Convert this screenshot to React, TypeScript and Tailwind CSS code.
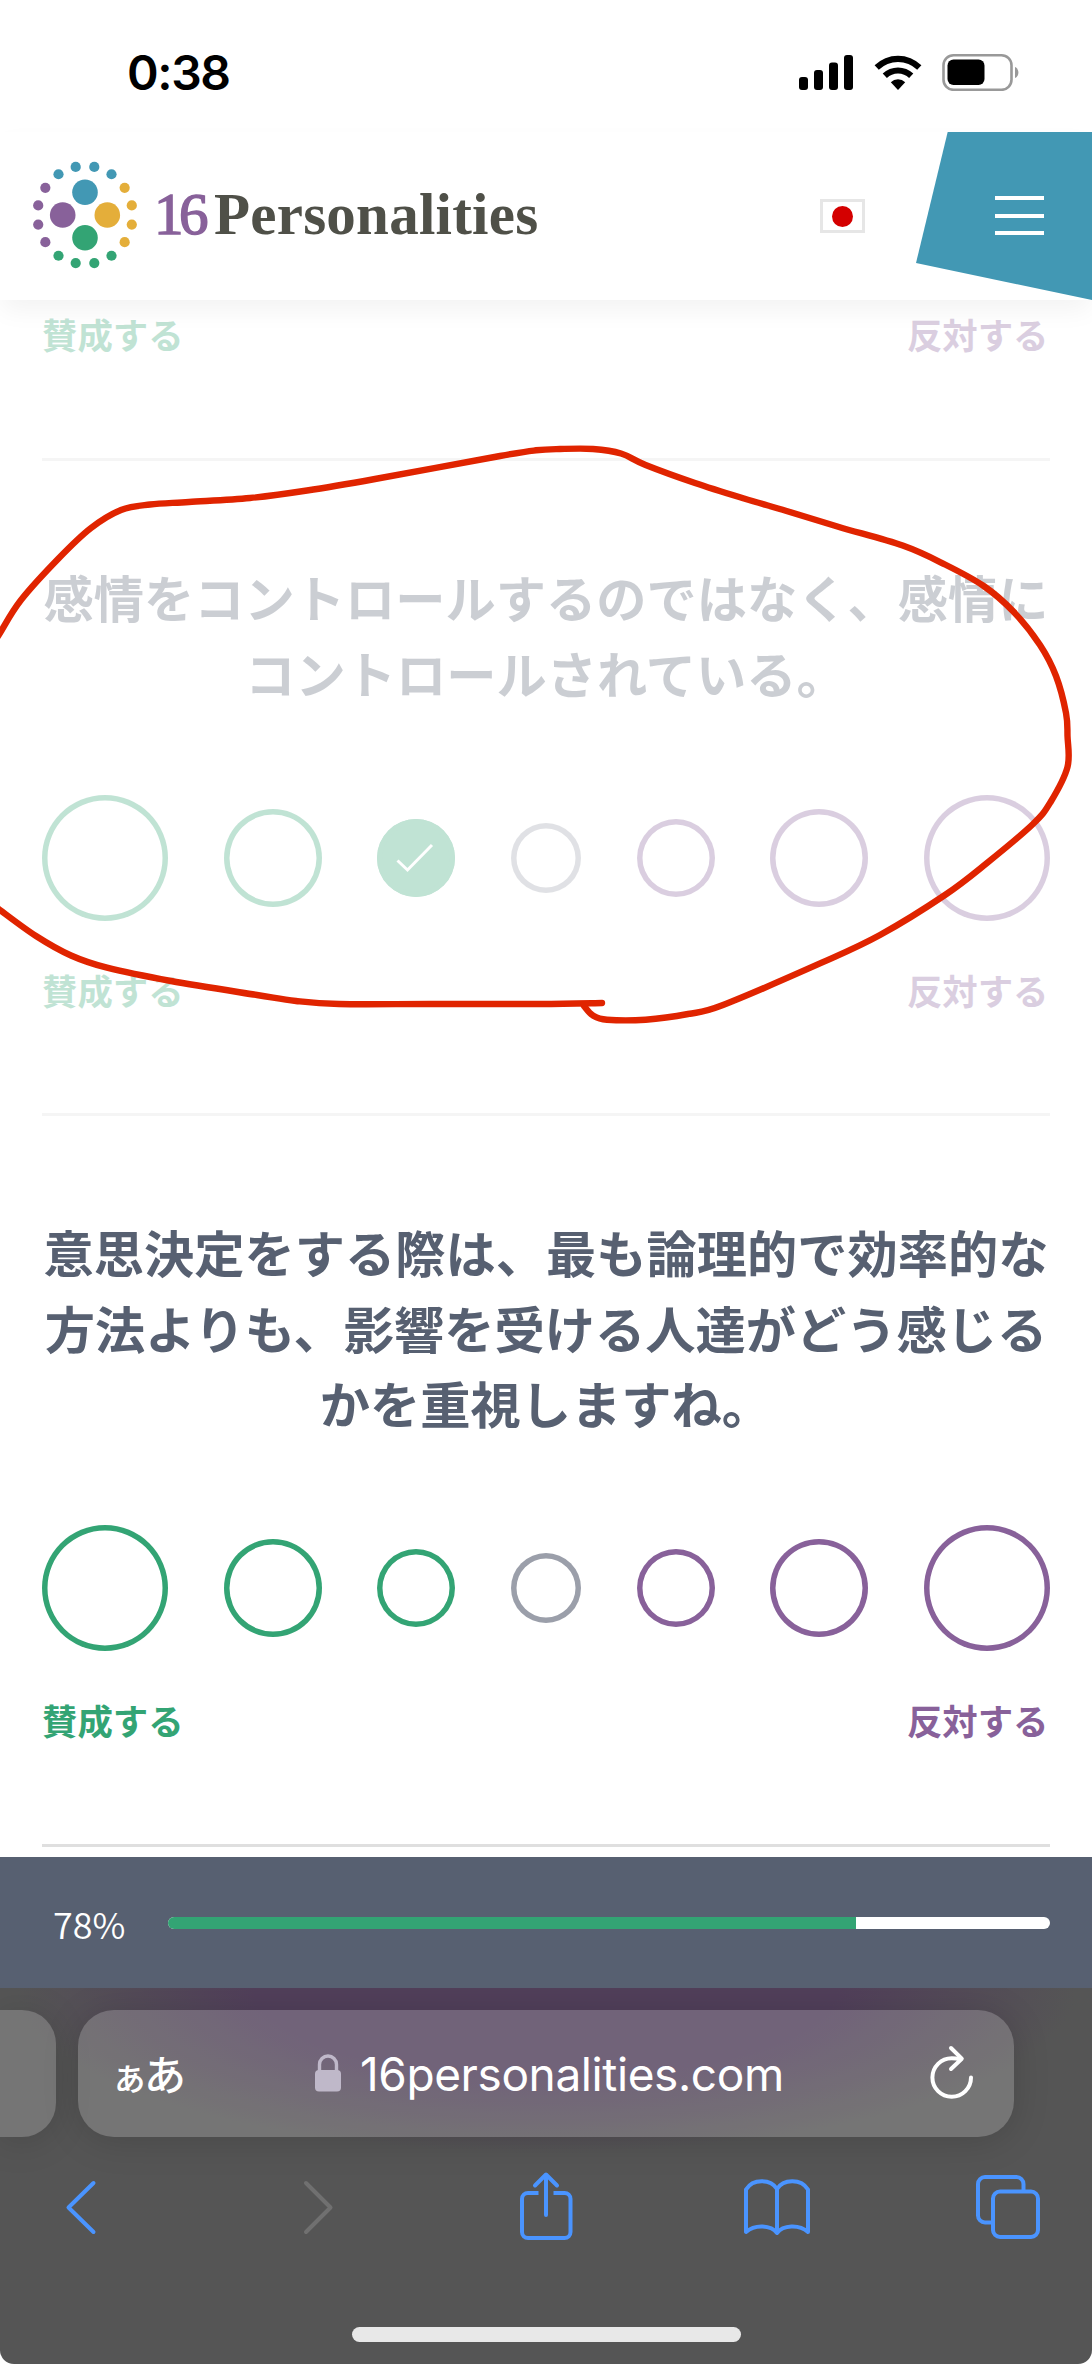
import clsx from "clsx";

type Tone = "agree" | "neutral" | "disagree";

const SCALE: { size: string; tone: Tone }[] = [
  { size: "size-[126px]", tone: "agree" },
  { size: "size-[98px]", tone: "agree" },
  { size: "size-[78px]", tone: "agree" },
  { size: "size-[70px]", tone: "neutral" },
  { size: "size-[78px]", tone: "disagree" },
  { size: "size-[98px]", tone: "disagree" },
  { size: "size-[126px]", tone: "disagree" },
];

const RING: Record<Tone, string> = {
  agree: "inset-ring-[#33a474]",
  neutral: "inset-ring-[#9b9faa]",
  disagree: "inset-ring-[#88619a]",
};

const DOT_COLORS = ["#e4ae3a", "#33a474", "#88619a", "#4298b4"];

// hand drawn marker, one list per side of the screen edge
const MARKER_TOP: number[][] = [
  [-6, 643], [0, 633], [21, 600], [59, 558], [91, 528], [121, 510], [150, 504.5], [189, 502],
  [250, 498], [307, 490.5], [375, 479], [500, 456], [536, 450.3], [560, 449], [593, 449],
  [621, 453.5], [645.6, 465], [695, 483], [744, 498.5], [786.5, 511], [839, 527], [902.7, 545.6],
  [945, 564.5], [983.7, 586], [1013.6, 611.8], [1040, 645], [1056, 676], [1066, 713], [1067.5, 736],
  [1067.5, 767], [1050.6, 802], [1033, 824], [987, 863], [945, 895], [880, 935], [821.7, 962.7],
  [723, 1005], [688, 1014], [645.6, 1019.7], [607, 1019.7], [593, 1015.5], [584, 1006],
];
const MARKER_BOTTOM: number[][] = [
  [602, 1003], [540, 1004], [430, 1004], [339, 1004], [296, 1001], [257, 995], [171, 981],
  [107, 967.7], [71, 955.5], [36, 936], [0, 910], [-6, 905],
];

function smooth(points: number[][]) {
  let d = `M${points[0][0]} ${points[0][1]}`;
  for (let i = 0; i < points.length - 1; i++) {
    const p0 = points[Math.max(i - 1, 0)];
    const p1 = points[i];
    const p2 = points[i + 1];
    const p3 = points[Math.min(i + 2, points.length - 1)];
    d += `C${p1[0] + (p2[0] - p0[0]) / 6} ${p1[1] + (p2[1] - p0[1]) / 6} ${p2[0] - (p3[0] - p1[0]) / 6} ${p2[1] - (p3[1] - p1[1]) / 6} ${p2[0]} ${p2[1]}`;
  }
  return d;
}

function StatusBar() {
  return (
    <div className="flex h-[132px] items-start pl-[127px] pr-[72px]">
      <span className="mt-[43px] font-['Inter',sans-serif] text-[48px] leading-[60px] font-semibold tracking-[-1.4px] text-black">
        0:38
      </span>
      <svg className="mt-[54px] ml-auto" width="56" height="37" viewBox="0 0 56 37">
        <rect x="1" y="23" width="9" height="13" rx="3" />
        <rect x="16" y="16" width="9" height="20" rx="3" />
        <rect x="31" y="8.5" width="9" height="27.5" rx="3" />
        <rect x="46" y="1" width="9" height="35" rx="3" />
      </svg>
      <svg className="mt-[54px] ml-[20px]" width="48" height="37" viewBox="0 0 48 37">
        <path d="M.6 11.3a33.5 33.5 0 0 1 46.8 0l-4.2 4.5a27.5 27.5 0 0 0-38.4 0z" />
        <path d="M8.7 19.6a22 22 0 0 1 30.6 0l-4.2 4.5a15.6 15.6 0 0 0-22.2 0z" />
        <path d="M16.8 28.2a10.4 10.4 0 0 1 14.4 0L24 36z" />
      </svg>
      <svg className="mt-[53px] ml-[20px]" width="78" height="38" viewBox="0 0 78 38">
        <rect x="1.5" y="2.2" width="68" height="34.6" rx="10" fill="none" stroke="#999" strokeWidth="2.6" />
        <rect x="5.5" y="6.6" width="37" height="25.4" rx="6" />
        <path d="M73 14c4.5 2 4.5 9 0 11z" fill="#999" />
      </svg>
    </div>
  );
}

function Logo() {
  return (
    <svg width="106" height="110" viewBox="-53 -55 106 110">
      {Array.from({ length: 16 }, (_, i) => {
        const angle = ((i * 22.5 + 11.25) * Math.PI) / 180;
        // the quadrants are centred on the axes
        const color = DOT_COLORS[Math.floor(((i + 2) % 16) / 4)];
        return <circle key={i} cx={47.7 * Math.cos(angle)} cy={49 * Math.sin(angle)} r="5.1" fill={color} />;
      })}
      <circle cy="-22.8" r="12.8" fill="#4298b4" />
      <circle cx="22.3" r="12.8" fill="#e4ae3a" />
      <circle cy="22.8" r="12.8" fill="#33a474" />
      <circle cx="-22.3" r="12.8" fill="#88619a" />
    </svg>
  );
}

function Header() {
  return (
    <header className="flex h-[168px] items-start bg-white pl-[32px] shadow-[0_12px_24px_-2px_rgba(0,0,0,0.05)]">
      <div className="mt-[28px]">
        <Logo />
      </div>
      <div className="mt-[49px] ml-[16px] flex font-['Liberation_Serif',serif] text-[59px] leading-[66px] whitespace-nowrap">
        <span className="w-[60px] tracking-[-4.5px] text-[#88619a] [-webkit-text-stroke:1.5px_#88619a]">16</span>
        <span className="font-bold tracking-[0.25px] text-[#4f5048]">Personalities</span>
      </div>
      <div className="mt-[67px] mr-[51px] ml-auto flex h-[34px] w-[45px] items-center justify-center border-3 border-[#e6e6e6]">
        <div className="size-[21px] rounded-full bg-[#d40000]" />
      </div>
      <div className="flex h-[168px] w-[176px] flex-col gap-[13.5px] bg-[#4298b4] pt-[64px] pl-[79px] [clip-path:polygon(18%_0,100%_0,100%_100%,0_78%)]">
        <div className="h-[4px] w-[49px] bg-white" />
        <div className="h-[4px] w-[49px] bg-white" />
        <div className="h-[4px] w-[49px] bg-white" />
      </div>
    </header>
  );
}

function Captions() {
  return (
    <div className="flex justify-between pr-[1.5px] text-[35.4px] leading-[52px] font-bold">
      <span className="text-[#33a474]">賛成する</span>
      <span className="text-[#88619a]">反対する</span>
    </div>
  );
}

function Question({ lines, selected, className }: { lines: string[]; selected?: number; className?: string }) {
  return (
    <section className={clsx("border-b-3 border-[#dfdfdf] pt-[98px] pb-[97.5px]", className)}>
      <h2 className="text-center text-[50.25px] leading-[75.6px] font-bold text-[#576071]">
        {lines.map((line) => (
          <span key={line} className="block whitespace-nowrap">
            {line}
          </span>
        ))}
      </h2>
      <div className="mt-[84.5px] flex items-center justify-between">
        {SCALE.map(({ size, tone }, i) => (
          <div
            key={i}
            className={clsx(
              "flex items-center justify-center rounded-full inset-ring-[5.5px]",
              size,
              RING[tone],
              selected === i && "bg-[#33a474]",
            )}
          >
            {selected === i && (
              <svg className="-ml-[2px]" width="40" height="32" viewBox="0 0 40 32" fill="none" stroke="#fff" strokeWidth="3">
                <path d="M2.5 18.5l10 9.5L37 3" />
              </svg>
            )}
          </div>
        ))}
      </div>
      <div className="mt-[43px]">
        <Captions />
      </div>
    </section>
  );
}

function Browser() {
  return (
    <div className="h-[376px] overflow-hidden rounded-b-[14px] bg-[#555] bg-[radial-gradient(ellipse_530px_165px_at_50%_0,#513f5a_0%,#513f5a_55%,#555_100%)] pt-[22px]">
      <div className="flex h-[127px] gap-[22px]">
        <div className="w-[56px] rounded-r-[34px] bg-white/19 shadow-[0_4px_36px_rgba(0,0,0,0.15)]" />
        <div className="flex w-[936px] items-center rounded-[36px] bg-white/19 pr-[40px] pl-[33px] text-white shadow-[0_4px_36px_rgba(0,0,0,0.15)]">
          <div className="flex w-[72px] items-baseline font-['Noto_Sans_CJK_JP',sans-serif] leading-[60px] font-medium">
            <span className="text-[37px]">ぁ</span>
            <span className="-ml-[4px] text-[42px]">あ</span>
          </div>
          <svg className="mb-[1px] ml-[131px]" width="28" height="38" viewBox="0 0 28 38" fill="#bfb8c9">
            <path d="M5.5 17v-6.5a8.5 8.5 0 0 1 17 0V17" fill="none" stroke="#bfb8c9" strokeWidth="3.4" />
            <rect x="1" y="16" width="26" height="21.5" rx="4" />
          </svg>
          <span className="ml-[18px] font-['Inter',sans-serif] text-[46px] leading-[60px] tracking-[-0.4px]">
            16personalities.com
          </span>
          <svg
            className="mb-[6px] ml-auto"
            width="44"
            height="56"
            viewBox="0 0 44 56"
            fill="none"
            stroke="#fff"
            strokeWidth="4"
            strokeLinecap="round"
          >
            <path d="M41 34.5a19.3 19.3 0 1 1-19.3-19.3q4.5 0 8.5 1" />
            <path d="M21 5l10.8 10.7L21 26" strokeLinejoin="round" />
          </svg>
        </div>
      </div>
      <div className="mt-[34px] ml-[65px] flex h-[72px] items-center text-[#4a94ff] [&>svg]:shrink-0">
        <svg width="32" height="56" viewBox="0 0 32 56" fill="none" stroke="currentColor" strokeWidth="4" strokeLinecap="round" strokeLinejoin="round">
          <path d="M28.5 4L3.5 28.5l25 24.5" />
        </svg>
        <svg className="ml-[205px]" width="32" height="56" viewBox="0 0 32 56" fill="none" stroke="#707070" strokeWidth="4" strokeLinecap="round" strokeLinejoin="round">
          <path d="M4 4l24.5 24.5L4 53" />
        </svg>
        <svg className="ml-[184px]" width="56" height="72" viewBox="0 0 56 72" fill="none" stroke="currentColor" strokeWidth="4" strokeLinecap="round">
          <path d="M20.5 22H10a6 6 0 0 0-6 6v33a6 6 0 0 0 6 6h36.5a6 6 0 0 0 6-6v-33a6 6 0 0 0-6-6H35.5" strokeLinecap="butt" />
          <path d="M28 44V4M17 14.5L28 3.5l11 11" strokeLinejoin="round" />
        </svg>
        <svg className="ml-[169px]" width="68" height="60" viewBox="0 0 68 60" fill="none" stroke="currentColor" strokeWidth="4" strokeLinejoin="round">
          <path d="M34 56C28 48 12 47 3 55V12.5C10 1 28 2 34 12C40 2 58 1 65 12.5V55C56 47 40 48 34 56zM34 12v44" />
        </svg>
        <svg className="ml-[164px]" width="66" height="66" viewBox="0 0 66 66" fill="none" stroke="currentColor" strokeWidth="4">
          <path d="M17 48.5h-7a7 7 0 0 1-7-7V10a7 7 0 0 1 7-7h31.5a7 7 0 0 1 7 7v7" />
          <rect x="18" y="17.5" width="45" height="45.5" rx="7" />
        </svg>
      </div>
      <div className="mx-auto mt-[84px] h-[15px] w-[389px] rounded-full bg-[#e8e8e8]" />
    </div>
  );
}

export default function App() {
  return (
    <div className="relative flex h-[2364px] w-[1092px] flex-col overflow-hidden bg-white font-['Noto_Sans_CJK_JP',sans-serif]">
      <StatusBar />
      <Header />
      <main className="h-[1557px] overflow-hidden px-[42px]">
        <div className="border-b-3 border-[#dfdfdf] pt-[7.5px] pb-[98.5px] opacity-30">
          <Captions />
        </div>
        <Question
          className="opacity-30"
          lines={["感情をコントロールするのではなく、感情に", "コントロールされている。"]}
          selected={2}
        />
        <Question
          lines={["意思決定をする際は、最も論理的で効率的な", "方法よりも、影響を受ける人達がどう感じる", "かを重視しますね。"]}
        />
      </main>
      <div className="flex h-[131px] items-center bg-[#576071] pr-[42px] pl-[53px] text-white">
        <span className="w-[115px] text-[36px] leading-[52px] font-[350]">78%</span>
        <div className="h-[12px] flex-1 overflow-hidden rounded-full bg-white">
          <div className="h-full bg-[#33a474]" style={{ width: "78%" }} />
        </div>
      </div>
      <Browser />
      <svg
        className="pointer-events-none absolute inset-0"
        width="1092"
        height="2364"
        fill="none"
        stroke="#e02400"
        strokeWidth="6.4"
        strokeLinecap="round"
        strokeLinejoin="round"
      >
        <path d={smooth(MARKER_TOP)} />
        <path d={smooth(MARKER_BOTTOM)} />
      </svg>
    </div>
  );
}
